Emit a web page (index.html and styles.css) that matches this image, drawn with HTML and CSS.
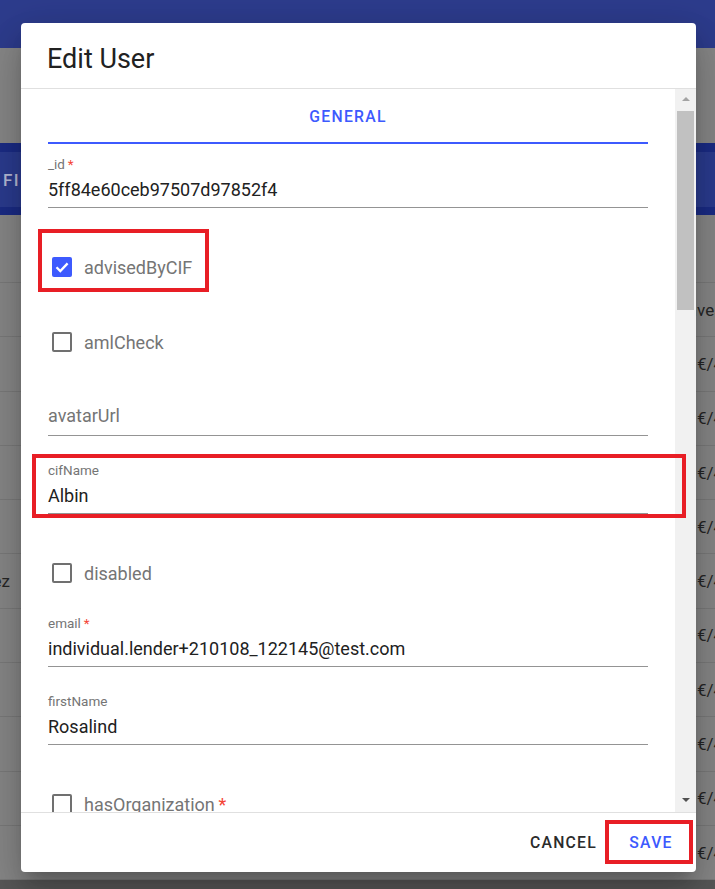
FILE: index.html
```html
<!DOCTYPE html>
<html lang="en">
<head>
    <meta charset="UTF-8">
    <meta name="viewport" content="width=device-width, initial-scale=1.0">
    <title>Edit User</title>
    <link rel="stylesheet" href="styles.css">
</head>
<body>
    <!-- halaman di belakang dialog -->
    <div class="page">
        <div class="appbar"></div>
        <div class="bar-space"></div>
        <div class="toolbar">
            <div class="toolbar-btn">FILTERS</div>
        </div>
        <div class="table">
            <div class="table-top"></div>
            <div class="row head"><span class="cell-l"></span><span class="cell-r">Invested</span></div>
            <div class="row"><span class="cell-l"></span><span class="cell-r">€/45</span></div>
            <div class="row"><span class="cell-l"></span><span class="cell-r">€/45</span></div>
            <div class="row"><span class="cell-l"></span><span class="cell-r">€/45</span></div>
            <div class="row"><span class="cell-l"></span><span class="cell-r">€/45</span></div>
            <div class="row"><span class="cell-l">Martinez</span><span class="cell-r">€/45</span></div>
            <div class="row"><span class="cell-l"></span><span class="cell-r">€/45</span></div>
            <div class="row"><span class="cell-l"></span><span class="cell-r">€/45</span></div>
            <div class="row"><span class="cell-l"></span><span class="cell-r">€/45</span></div>
            <div class="row"><span class="cell-l"></span><span class="cell-r">€/45</span></div>
            <div class="row"><span class="cell-l"></span><span class="cell-r">€/45</span></div>
        </div>
        <div class="bottom-strip"></div>
    </div>

    <div class="dialog">
        <h2 class="dialog-title">Edit User</h2>

        <div class="dialog-body">
            <div class="form">
                <div class="tabs">
                    <div class="tab">GENERAL</div>
                </div>

                <div class="fields">
                    <div class="field">
                        <label class="field-label">_id<span class="req">&thinsp;*</span></label>
                        <div class="field-value">5ff84e60ceb97507d97852f4</div>
                    </div>

                    <div class="check">
                        <span class="box on">
                            <svg viewBox="0 0 20 20" width="20" height="20"><polyline points="4.5,10.2 8.3,14 15.6,6.4" fill="none" stroke="#fff" stroke-width="2.3"/></svg>
                        </span>
                        <span class="check-label">advisedByCIF</span>
                    </div>

                    <div class="check">
                        <span class="box"></span>
                        <span class="check-label">amlCheck</span>
                    </div>

                    <div class="field">
                        <label class="field-label"></label>
                        <div class="field-value empty">avatarUrl</div>
                    </div>

                    <div class="field">
                        <label class="field-label">cifName</label>
                        <div class="field-value">Albin</div>
                    </div>

                    <div class="check">
                        <span class="box"></span>
                        <span class="check-label">disabled</span>
                    </div>

                    <div class="field">
                        <label class="field-label">email<span class="req">&thinsp;*</span></label>
                        <div class="field-value">individual.lender+210108_122145@test.com</div>
                    </div>

                    <div class="field">
                        <label class="field-label">firstName</label>
                        <div class="field-value">Rosalind</div>
                    </div>

                    <div class="check">
                        <span class="box"></span>
                        <span class="check-label">hasOrganization<span class="req">&thinsp;*</span></span>
                    </div>
                </div>
            </div>

            <!-- scrollbar gaya windows -->
            <div class="scrollbar">
                <div class="sb-arrow"><span class="tri-up"></span></div>
                <div class="sb-thumb"></div>
                <div class="sb-fill"></div>
                <div class="sb-arrow sb-down"><span class="tri-down"></span></div>
            </div>
        </div>

        <div class="actions">
            <button class="btn">CANCEL</button>
            <button class="btn btn-primary">SAVE</button>
        </div>
    </div>

    <!-- kotak merah penanda -->
    <div class="mark mark-advised"></div>
    <div class="mark mark-cif"></div>
    <div class="mark mark-save"></div>
</body>
</html>
```

FILE: styles.css
```css
body {
    margin: 0;
    width: 715px;
    height: 889px;
    overflow: hidden;
    position: relative;
    background: #888888;
    font-family: Roboto, "Noto Sans", sans-serif;
}

/* background page */
.page {
    height: 889px;
    display: flex;
    flex-direction: column;
}
.appbar {
    height: 48px;
    background: #2d3c8d;
    flex: none;
}
.bar-space {
    height: 95px;
    flex: none;
}
.toolbar {
    height: 72px;
    box-sizing: border-box;
    flex: none;
    background: #2b3c90;
    border-top: 9px solid #1b2c86;
    border-bottom: 8px solid #1b2c86;
    display: flex;
    align-items: center;
    padding-left: 3px;
}
.toolbar-btn {
    color: #b8bdd8;
    font-size: 17px;
    font-weight: 500;
    letter-spacing: 1.5px;
}
.table-top {
    height: 68px;
    box-sizing: border-box;
    border-bottom: 1px solid #7b7b7b;
}
.row {
    height: 54.3px;
    box-sizing: border-box;
    border-bottom: 1px solid #7b7b7b;
    display: flex;
    align-items: center;
    font-size: 17px;
    color: #262626;
}
.cell-l {
    width: 10px;
    display: flex;
    justify-content: flex-end;
    white-space: nowrap;
}
.cell-r {
    margin-left: auto;
    width: 18px;
    white-space: nowrap;
}
.row.head .cell-r {
    width: 32px;
}
.bottom-strip {
    flex: 1;
    background: #585858;
}

/* dialog */
.dialog {
    position: absolute;
    left: 21px;
    top: 23px;
    width: 675px;
    height: 849px;
    background: #fff;
    border-radius: 4px;
    display: flex;
    flex-direction: column;
    overflow: hidden;
    box-shadow: 0 11px 15px -7px rgba(0, 0, 0, 0.2), 0 24px 38px 3px rgba(0, 0, 0, 0.14), 0 9px 46px 8px rgba(0, 0, 0, 0.12);
}
.dialog-title {
    margin: 0;
    padding: 20px 27px 13px 26px;
    font-size: 27px;
    font-weight: 400;
    line-height: 32px;
    color: #212121;
    border-bottom: 1px solid #e0e0e0;
}
.dialog-body {
    flex: 1;
    min-height: 0;
    display: flex;
}
.form {
    flex: 1;
    padding: 0 27px;
    overflow: hidden;
}
.tabs {
    height: 55px;
    display: flex;
}
.tab {
    flex: 1;
    display: flex;
    align-items: center;
    justify-content: center;
    box-sizing: border-box;
    padding-top: 2px;
    border-bottom: 2px solid #3d5afe;
    color: #3d5afe;
    font-size: 15.75px;
    font-weight: 500;
    letter-spacing: 1.25px;
}
.fields {
    padding-top: 4px;
}

.field {
    padding: 8px 0 18px;
}
.field-label {
    display: block;
    height: 16px;
    font-size: 13.5px;
    line-height: 16px;
    color: #757575;
}
.req {
    color: #f44336;
}
.field-value {
    padding: 7px 0;
    font-size: 18px;
    line-height: 21px;
    color: #212121;
    white-space: nowrap;
    border-bottom: 1px solid #949494;
}
.field-value.empty {
    color: #757575;
    padding: 5px 0 9px;
}

.check {
    height: 42px;
    padding: 20px 0 13px;
    display: flex;
    align-items: center;
}
.box {
    width: 20px;
    height: 20px;
    margin-left: 4px;
    box-sizing: border-box;
    border: 2px solid #707070;
    border-radius: 2px;
    flex: none;
}
.box.on {
    background: #3d5afe;
    border: none;
}
.box svg {
    display: block;
}
.check-label {
    margin-left: 12px;
    font-size: 18px;
    color: #757575;
    white-space: nowrap;
}

/* scrollbar */
.scrollbar {
    width: 21px;
    background: #f1f1f1;
    display: flex;
    flex-direction: column;
}
.sb-arrow {
    height: 19px;
    display: flex;
    align-items: center;
    justify-content: center;
    flex: none;
}
.sb-down {
    margin-bottom: 3px;
}
.tri-up {
    width: 0;
    height: 0;
    border-left: 4px solid transparent;
    border-right: 4px solid transparent;
    border-bottom: 4px solid #a3a3a3;
}
.tri-down {
    width: 0;
    height: 0;
    border-left: 4px solid transparent;
    border-right: 4px solid transparent;
    border-top: 4px solid #505050;
}
.sb-thumb {
    margin: 3px 0 0 2px;
    width: 17px;
    height: 199px;
    background: #c1c1c1;
    flex: none;
}
.sb-fill {
    flex: 1;
}

/* actions */
.actions {
    height: 59px;
    flex: none;
    border-top: 1px solid #e0e0e0;
    display: flex;
    justify-content: flex-end;
    align-items: center;
    gap: 9px;
    padding: 0 9px;
}
.btn {
    font-family: inherit;
    font-size: 15.75px;
    font-weight: 500;
    letter-spacing: 1.25px;
    line-height: 1.75;
    padding: 7px 9px;
    min-width: 72px;
    background: none;
    border: 0;
    color: #2b2b2b;
}
.btn-primary {
    color: #3d5afe;
}

/* annotation boxes */
.mark {
    position: absolute;
    box-sizing: border-box;
    border: 4px solid #e81e25;
}
.mark-advised {
    left: 38px;
    top: 229px;
    width: 171px;
    height: 63px;
}
.mark-cif {
    left: 32px;
    top: 454px;
    width: 654px;
    height: 64px;
}
.mark-save {
    left: 605px;
    top: 820px;
    width: 88px;
    height: 44px;
}
```
